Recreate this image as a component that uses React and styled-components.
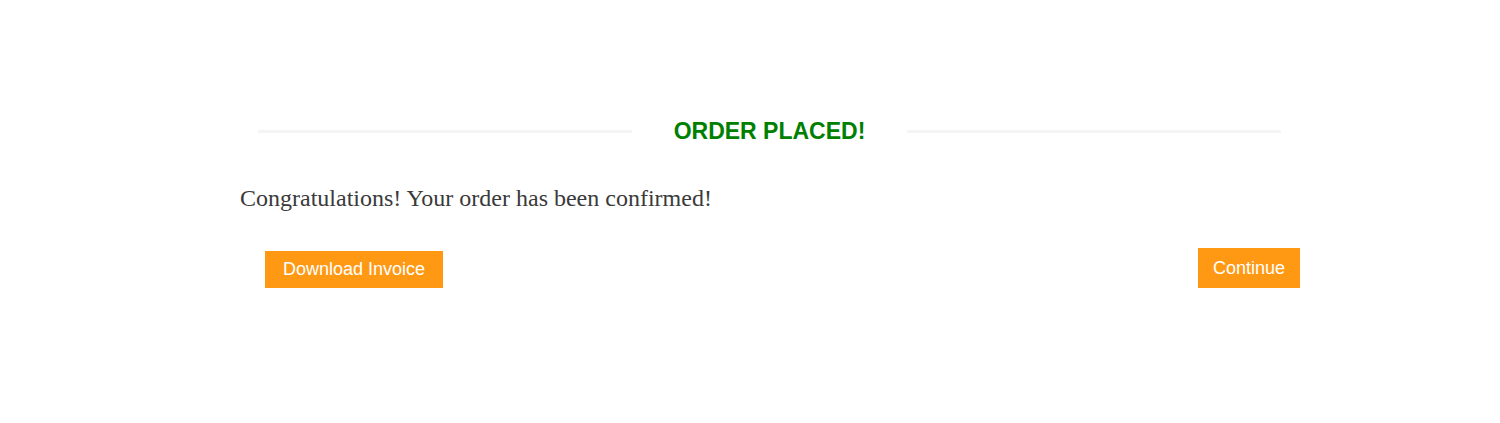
import React from "react";
import styled, { createGlobalStyle } from "styled-components";

const GlobalStyle = createGlobalStyle`
  body {
    margin: 0;
    background: #fff;
  }
`;

const Wrapper = styled.div`
  width: 1060px;
  margin-left: 240px;
  padding-top: 115px;
`;

const TitleRow = styled.div`
  display: flex;
  align-items: center;
  gap: 42px;
  margin: 0 19px 0 18px;
`;

const Line = styled.div`
  flex: 1;
  height: 3px;
  background: #f4f4f4;
`;

const Title = styled.h2`
  margin: 0;
  font-family: "Liberation Sans", Arial, sans-serif;
  font-size: 23px;
  font-weight: bold;
  color: #008000;
  line-height: 32px;
`;

const Message = styled.p`
  margin: 36px 0 0;
  font-family: "Liberation Serif", "Times New Roman", serif;
  font-size: 24px;
  font-weight: normal;
  color: #3a3a3a;
  line-height: 30px;
`;

const Actions = styled.div`
  display: flex;
  justify-content: space-between;
  align-items: flex-end;
  margin-top: 35px;
  padding-left: 25px;
`;

const Button = styled.button`
  height: ${(p) => p.$h}px;
  padding: 0 ${(p) => p.$px}px;
  border: none;
  border-radius: 0;
  background: #ff9914;
  color: #fff;
  font-family: "Liberation Sans", Arial, sans-serif;
  font-size: 18px;
  cursor: pointer;
`;

export default function App() {
  return (
    <>
      <GlobalStyle />
      <Wrapper>
        <TitleRow>
          <Line />
          <Title>ORDER PLACED!</Title>
          <Line />
        </TitleRow>
        <Message>Congratulations! Your order has been confirmed!</Message>
        <Actions>
          <Button $h={37} $px={18}>Download Invoice</Button>
          <Button $h={40} $px={15}>Continue</Button>
        </Actions>
      </Wrapper>
    </>
  );
}
